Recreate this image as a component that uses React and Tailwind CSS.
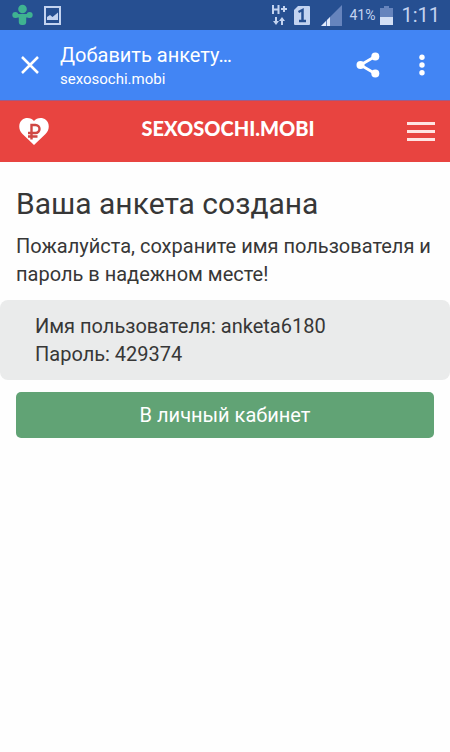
function StatusBar() {
  return (
    <div className="flex h-[30px] items-center justify-between bg-[#264f91] pr-[10px] pl-3 text-[#c3d3f0]">
      <div className="flex items-center gap-[11px]">
        <svg className="h-[22px] w-[21px]" viewBox="0 0 21 22" fill="#3fb391" aria-hidden="true">
          <circle cx="10.5" cy="5" r="4.3" />
          <circle cx="3.3" cy="11" r="3" />
          <circle cx="17.7" cy="11" r="3" />
          <path d="M3 9.500q7.500 1.500 15 0v4H3z" />
          <rect x="6.8" y="10" width="7.4" height="11" rx="3" />
        </svg>
        <svg className="h-[19px] w-[17px]" viewBox="0 0 17 19" aria-hidden="true">
          <rect x="1" y="1" width="15" height="17" fill="none" stroke="currentColor" strokeWidth="2" />
          <path d="M3 14v-3l3-2 2.500 2L14 6.500V14z" fill="currentColor" />
        </svg>
      </div>
      <div className="flex items-center">
        <svg className="h-[22px] w-[17px]" viewBox="0 0 17 22" fill="none" stroke="currentColor" strokeWidth="2" aria-label="H+">
          <path d="M2 1v9M7.500 1v9M2 5.500h5.500M10 5h6M13 2v6" />
          <path d="M5 13v5M11 21v-5" />
          <path d="M2 17h6l-3 4zM8 17h6l-3-4z" fill="currentColor" stroke="none" />
        </svg>
        <svg className="ml-[6px] h-[19px] w-[16px]" viewBox="0 0 16 19" aria-label="SIM 1">
          <path d="M4 0h11a1 1 0 0 1 1 1v17a1 1 0 0 1-1 1H1a1 1 0 0 1-1-1V4z" fill="currentColor" />
          <path d="M4.500 6L8.500 4v11M5 15h7" fill="none" stroke="#264f91" strokeWidth="2.500" />
        </svg>
        <svg className="ml-[11px] h-[21px] w-[21px]" viewBox="0 0 21 21" aria-hidden="true">
          <path d="M21 0v21H0z" fill="#6684bd" />
          <path d="M5 16v5H0zM9 12v9H6v-6z" fill="#e2ebfb" />
        </svg>
        <span className="ml-[7px] text-sm">41%</span>
        <svg className="ml-[5px] h-[19px] w-[13px]" viewBox="0 0 13 19" aria-hidden="true">
          <path d="M4 0h5v2h4v9H0V2h4z" fill="#6684bd" />
          <path d="M0 11h13v8H0z" fill="#d3dff5" />
        </svg>
        <span className="ml-2 text-xl">1:11</span>
      </div>
    </div>
  );
}

function BrowserBar() {
  return (
    <div className="flex h-[70px] items-center bg-[#4285f4] pr-[22px] pl-[21px] text-white">
      <button type="button" aria-label="Закрыть">
        <svg className="block h-[18px] w-[18px]" viewBox="0 0 18 18" stroke="currentColor" strokeWidth="2.500" aria-hidden="true">
          <path d="M1 1l16 16M17 1L1 17" />
        </svg>
      </button>
      <div className="ml-[21px] min-w-0 flex-1 pt-1">
        <div className="truncate text-xl leading-6">Добавить анкету…</div>
        <div className="truncate text-[15px] leading-6">sexosochi.mobi</div>
      </div>
      <button type="button" aria-label="Поделиться">
        <svg className="block h-[26px] w-[24px]" viewBox="0 0 24 26" fill="currentColor" aria-hidden="true">
          <path d="M19 4.500L4.500 13L19 21.500" fill="none" stroke="currentColor" strokeWidth="2.800" />
          <circle cx="19.300" cy="4.500" r="4" />
          <circle cx="4.500" cy="13" r="4" />
          <circle cx="19.300" cy="21.500" r="4" />
        </svg>
      </button>
      <button type="button" aria-label="Меню браузера" className="ml-9">
        <svg className="block h-[22px] w-[12px]" viewBox="0 0 12 22" fill="currentColor" aria-hidden="true">
          <circle cx="6" cy="3.300" r="2.700" />
          <circle cx="6" cy="11" r="2.700" />
          <circle cx="6" cy="18.700" r="2.700" />
        </svg>
      </button>
    </div>
  );
}

function SiteHeader() {
  return (
    <header className="flex h-[62px] items-center justify-between border-t border-[#a05a86] bg-[#e84440] pr-[15px] pl-[19px] text-white">
      <button type="button" aria-label="Баланс">
        <svg className="block h-[27px] w-[30px]" viewBox="0 0 30 27" aria-hidden="true">
          <path
            d="M15 27L3.500 16C-1 11.500-.5 5 3 2 7-1.300 12.500 0 15 3 17.500 0 23-1.300 27 2c3.500 3 4 9.500-.5 14z"
            fill="currentColor"
          />
          <path d="M12.500 21.500V7h4a3.900 3.900 0 0 1 0 8H9M9 18.500h9.500" fill="none" stroke="#cf4743" strokeWidth="2.400" />
        </svg>
      </button>
      <a href="#" className="pb-2 font-['Lato',sans-serif] text-xl leading-6 font-black">
        SEXOSOCHI.MOBI
      </a>
      <button type="button" aria-label="Меню" className="flex w-[28px] flex-col gap-[5px]">
        <span className="h-[3px] bg-[#ffe4e2]" />
        <span className="h-[3px] bg-[#ffe4e2]" />
        <span className="h-[3px] bg-[#ffe4e2]" />
      </button>
    </header>
  );
}

export default function App() {
  return (
    <div className="min-h-screen bg-[#fefefe] font-['Roboto',sans-serif] text-[#373737]">
      <StatusBar />
      <BrowserBar />
      <SiteHeader />
      <main className="pt-[22px] text-xl leading-7">
        <h1 className="px-4 text-3xl leading-10">Ваша анкета создана</h1>
        <p className="mt-2 px-4">Пожалуйста, сохраните имя пользователя и пароль в надежном месте!</p>
        <div className="mt-3 rounded-lg bg-[#eaebeb] px-[35px] py-3">
          <p>Имя пользователя: anketa6180</p>
          <p>Пароль: 429374</p>
        </div>
        <div className="mt-3 px-4">
          <button type="button" className="h-[46px] w-full rounded-[5px] bg-[#61a375] text-white">
            В личный кабинет
          </button>
        </div>
      </main>
    </div>
  );
}
